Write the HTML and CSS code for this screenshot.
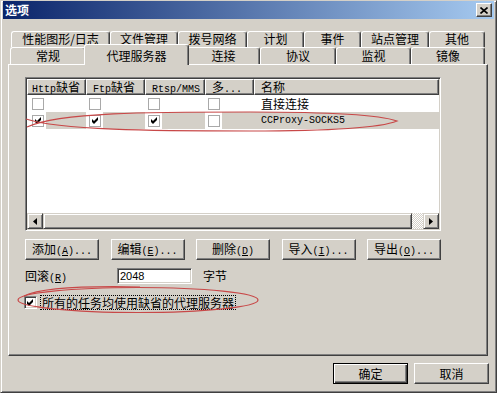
FILE: index.html
```html
<!DOCTYPE html>
<html lang="zh-CN">
<head>
  <meta charset="UTF-8">
  <title>选项</title>
  <meta name="viewport" content="width=device-width, initial-scale=1.0">
  <link rel="stylesheet" href="styles.css">
</head>
<body>
  <div class="window">
    <div class="titlebar">
      <span class="title">选项</span>
      <span class="close-btn">
        <svg width="8" height="7" viewBox="0 0 8 7"><path d="M0.5 0.5 L7.5 6.5 M7.5 0.5 L0.5 6.5" stroke="#000" stroke-width="1.6"/></svg>
      </span>
    </div>

    <div class="sheet">
      <div class="tab-row back">
        <div class="tab">性能图形/日志</div>
        <div class="tab">文件管理</div>
        <div class="tab">拨号网络</div>
        <div class="tab">计划</div>
        <div class="tab">事件</div>
        <div class="tab">站点管理</div>
        <div class="tab">其他</div>
      </div>
      <div class="tab-row front">
        <div class="tab">常规</div>
        <div class="tab active">代理服务器</div>
        <div class="tab">连接</div>
        <div class="tab">协议</div>
        <div class="tab">监视</div>
        <div class="tab">镜像</div>
      </div>

      <div class="panel">
        <div class="listview">
          <div class="lv-head">
            <div class="col"><span class="en">Http</span>缺省</div>
            <div class="col"><span class="en">Ftp</span>缺省</div>
            <div class="col"><span class="en">Rtsp/MMS</span></div>
            <div class="col">多<span class="en">...</span></div>
            <div class="col">名称</div>
          </div>
          <div class="lv-body">
            <div class="lv-row">
              <div class="cell"><span class="ico"><span class="box"></span></span></div>
              <div class="cell"><span class="ico"><span class="box"></span></span></div>
              <div class="cell"><span class="ico"><span class="box"></span></span></div>
              <div class="cell"><span class="ico"><span class="box"></span></span></div>
              <div class="cell name">直接连接</div>
            </div>
            <div class="lv-row sel">
              <div class="cell"><span class="ico"><span class="box"><svg width="7" height="7" viewBox="0 0 7 7"><polygon points="0,2 2,4 6,0 6,3 2,7 0,5"/></svg></span></span></div>
              <div class="cell"><span class="ico"><span class="box"><svg width="7" height="7" viewBox="0 0 7 7"><polygon points="0,2 2,4 6,0 6,3 2,7 0,5"/></svg></span></span></div>
              <div class="cell"><span class="ico"><span class="box"><svg width="7" height="7" viewBox="0 0 7 7"><polygon points="0,2 2,4 6,0 6,3 2,7 0,5"/></svg></span></span></div>
              <div class="cell"><span class="ico"><span class="box"></span></span></div>
              <div class="cell name"><span class="en">CCProxy-SOCKS5</span></div>
            </div>
          </div>
          <div class="hscroll">
            <span class="sb-btn"><svg width="4" height="7" viewBox="0 0 4 7"><polygon points="4,0 0,3.5 4,7"/></svg></span>
            <span class="sb-thumb"></span>
            <span class="sb-track"></span>
            <span class="sb-btn"><svg width="4" height="7" viewBox="0 0 4 7"><polygon points="0,0 4,3.5 0,7"/></svg></span>
          </div>
        </div>

        <div class="btn-row">
          <button class="btn">添加<span class="en">(<u>A</u>)...</span></button>
          <button class="btn">编辑<span class="en">(<u>E</u>)...</span></button>
          <button class="btn">删除<span class="en">(<u>D</u>)</span></button>
          <button class="btn">导入<span class="en">(<u>I</u>)...</span></button>
          <button class="btn">导出<span class="en">(<u>O</u>)...</span></button>
        </div>

        <div class="field-row">
          <label for="rollback">回滚<span class="en">(<u>R</u>)</span></label>
          <input type="text" id="rollback" class="num" value="2048">
          <span class="unit">字节</span>
        </div>

        <div class="check-row">
          <span class="check"><svg width="7" height="7" viewBox="0 0 7 7"><polygon points="0,2 2,4 6,0 6,3 2,7 0,5"/></svg></span>
          <span class="check-label">所有的任务均使用缺省的代理服务器</span>
        </div>
      </div>
    </div>

    <div class="actions">
      <button class="btn default">确定</button>
      <button class="btn">取消</button>
    </div>
  </div>

  <!-- red hand-drawn marks on top of the screenshot -->
  <svg class="marks" width="497" height="393" viewBox="0 0 497 393">
    <path d="M27 127 C60 112 150 112 250 112 C330 112 380 115 397 121 C380 128 330 131 250 131 C150 131 60 130 26 119"/>
    <ellipse cx="138" cy="300" rx="120" ry="12.5"/>
    <path d="M24 296 C40 288 90 286 140 287"/>
  </svg>
</body>
</html>
```

FILE: styles.css
```css
* {
  box-sizing: border-box;
}
body {
  margin: 0;
  font: 12px/14px "Noto Sans CJK SC", sans-serif;
  color: #000;
  background: #d4d0c8;
}
.en {
  font: 10px "Liberation Mono", monospace;
}
.window {
  width: 497px;
  height: 393px;
  background: #d4d0c8;
  border: 1px solid;
  border-color: #d4d0c8 #404040 #404040 #d4d0c8;
  box-shadow: inset 1px 1px #fff, inset -1px -1px #808080;
  padding: 0 2px;
}
.titlebar {
  height: 18px;
  display: flex;
  align-items: center;
  justify-content: space-between;
  padding: 0 2px;
  background: linear-gradient(to right, #0a246a, #a6caf0);
}
.title {
  color: #fff;
  font-weight: bold;
  line-height: 18px;
}
.close-btn {
  width: 16px;
  height: 14px;
  display: flex;
  align-items: center;
  justify-content: center;
  background: #d4d0c8;
  border: 1px solid;
  border-color: #fff #404040 #404040 #fff;
  box-shadow: inset -1px -1px #808080;
}
.sheet {
  margin: 12px 6px 0 5px;
}
.tab-row {
  display: grid;
  height: 16px;
}
.tab-row.back {
  margin-left: 3px;
  grid-template-columns: 99px 68px 69px 57px 57px 68px 56px;
}
.tab-row.front {
  margin-left: 2px;
  height: 17px;
  grid-template-columns: 76px 101px 73px 76px 75px 74px;
}
.tab {
  background: #d4d0c8;
  border: 1px solid;
  border-bottom: 0;
  border-color: #fff #404040 #fff #fff;
  border-radius: 3px 3px 0 0;
  box-shadow: inset -1px 0 #808080;
  text-align: center;
  line-height: 12px;
  padding-top: 1px;
  white-space: nowrap;
}
.tab-row.front .tab {
  padding-top: 2px;
}
.tab-row.front .tab.active {
  margin: -3px -2px -1px;
  padding-top: 5px;
  z-index: 1;
}
.panel {
  height: 292px;
  border: 1px solid;
  border-color: #fff #404040 #404040 #fff;
  box-shadow: inset -1px -1px #808080;
  padding: 12px 0 0 16px;
}
.listview {
  width: 416px;
  height: 154px;
  display: flex;
  flex-direction: column;
  background: #fff;
  border: 1px solid;
  border-color: #808080 #fff #fff #808080;
  box-shadow: inset 1px 1px #404040, inset -1px -1px #d4d0c8;
  padding: 1px;
}
.lv-head,
.lv-row {
  display: grid;
  grid-template-columns: 59px 59px 60px 49px 1fr;
}
.lv-head {
  height: 16px;
}
.lv-head .col {
  background: #d4d0c8;
  border: 1px solid;
  border-color: #fff #404040 #404040 #fff;
  box-shadow: inset -1px -1px #808080;
  padding-left: 6px;
  line-height: 13px;
  white-space: nowrap;
  overflow: hidden;
}
.lv-head .col:first-child {
  padding-left: 4px;
}
.lv-body {
  flex: 1;
}
.lv-row {
  height: 17px;
}
.cell {
  display: flex;
  align-items: center;
}
.lv-row.sel .cell {
  background: #d4d0c8;
}
.ico {
  height: 100%;
  display: flex;
  align-items: center;
  background: #fff;
  padding: 0 2px 0 3px;
}
.cell:first-child .ico {
  padding-left: 5px;
}
.box {
  width: 12px;
  height: 12px;
  display: flex;
  align-items: center;
  justify-content: center;
  background: #fff;
  border: 1px solid #a9a9a9;
}
.cell.name {
  padding-left: 7px;
  white-space: nowrap;
}
.hscroll {
  display: flex;
  height: 16px;
}
.sb-btn,
.sb-thumb {
  background: #d4d0c8;
  border: 1px solid;
  border-color: #d4d0c8 #404040 #404040 #d4d0c8;
  box-shadow: inset 1px 1px #fff, inset -1px -1px #808080;
}
.sb-btn {
  width: 16px;
  display: flex;
  align-items: center;
  justify-content: center;
}
.sb-thumb {
  flex: 0 0 369px;
}
.sb-track {
  flex: 1;
  background: repeating-conic-gradient(#fff 0 25%, #d4d0c8 0 50%) 0 0 / 2px 2px;
}
.btn {
  width: 74px;
  height: 21px;
  padding: 0;
  font: inherit;
  color: #000;
  background: #d4d0c8;
  border: 1px solid;
  border-color: #fff #404040 #404040 #fff;
  box-shadow: inset -1px -1px #808080;
  white-space: nowrap;
}
.btn-row {
  width: 416px;
  display: flex;
  justify-content: space-between;
  margin-top: 8px;
}
.field-row {
  display: flex;
  align-items: center;
  height: 16px;
  margin-top: 8px;
}
.field-row label {
  width: 92px;
}
.num {
  width: 75px;
  height: 16px;
  padding: 0 2px;
  font: 11px "Liberation Sans", sans-serif;
  background: #fff;
  border: 1px solid;
  border-color: #808080 #fff #fff #808080;
  box-shadow: inset 1px 1px #404040, inset -1px -1px #d4d0c8;
  outline: none;
}
.unit {
  margin-left: 11px;
}
.check-row {
  display: flex;
  align-items: center;
  margin: 12px 0 0 -1px;
}
.check {
  width: 13px;
  height: 13px;
  display: flex;
  align-items: center;
  justify-content: center;
  background: #fff;
  border: 1px solid;
  border-color: #808080 #fff #fff #808080;
  box-shadow: inset 1px 1px #404040, inset -1px -1px #d4d0c8;
}
.check-label {
  margin-left: 4px;
  padding: 0 1px;
  line-height: 13px;
  outline: 1px dotted #000;
}
.actions {
  display: flex;
  justify-content: flex-end;
  gap: 6px;
  margin: 7px 5px 0 0;
}
.actions .btn {
  width: 75px;
}
.btn.default {
  border: 1px solid #000;
  box-shadow: inset 1px 1px #fff, inset -1px -1px #404040, inset -2px -2px #808080;
}
.marks {
  position: absolute;
  top: 0;
  left: 0;
  pointer-events: none;
  fill: none;
  stroke: #c84848;
  stroke-width: 1.2;
}
```
